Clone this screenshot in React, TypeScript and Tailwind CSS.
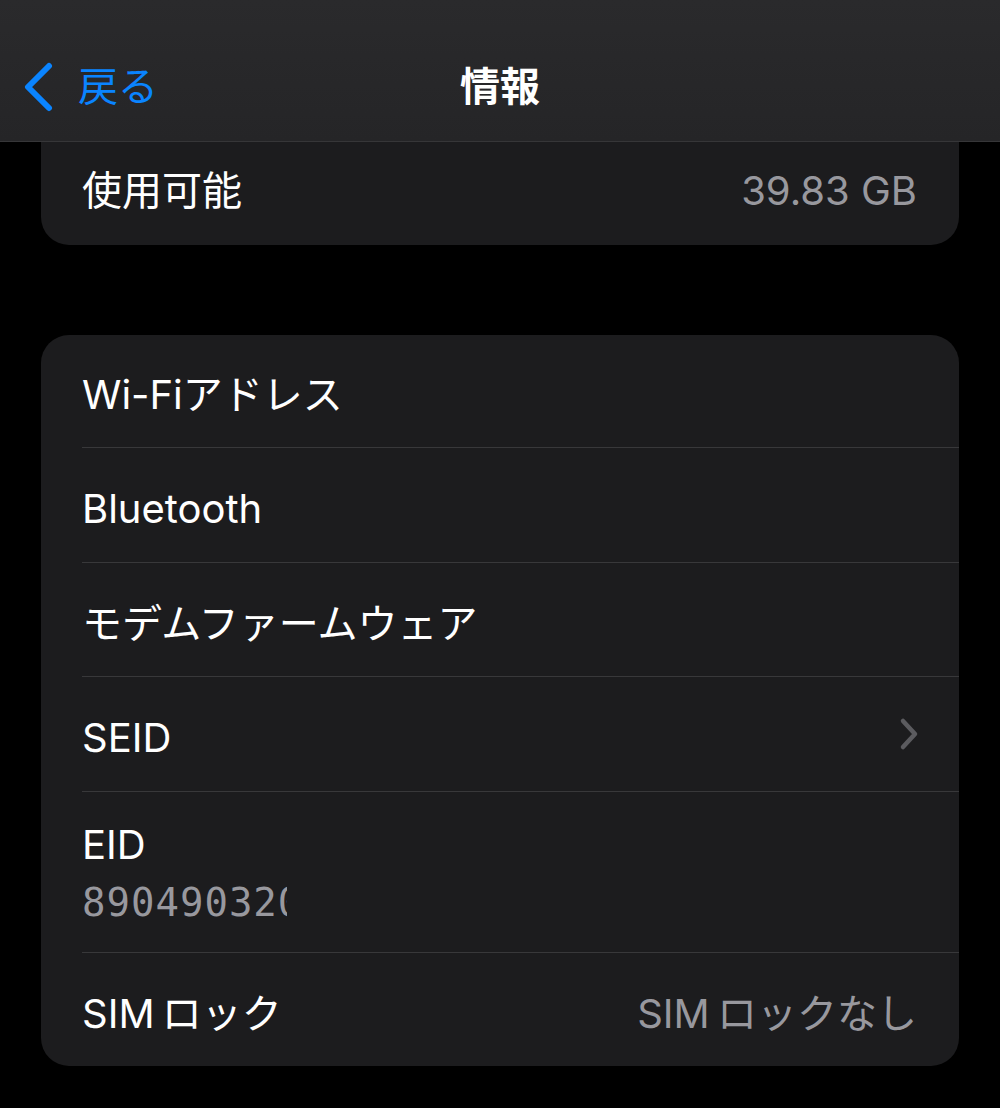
const font = "font-['Inter','Noto_Sans_CJK_JP',sans-serif]";

function Row({
  label,
  value,
  chevron,
  h,
  last,
}: {
  label: string;
  value?: string;
  chevron?: boolean;
  h: string;
  last?: boolean;
}) {
  return (
    <div
      className={`ml-[41px] pr-[42px] pt-[8px] flex items-center justify-between ${h} ${
        last ? "" : "border-b border-[#38383a]"
      }`}
    >
      <span className="text-[40px] leading-[48px] text-white">{label}</span>
      {value && <span className="text-[40px] leading-[48px] text-[#98989e]">{value}</span>}
      {chevron && (
        <svg width="20" height="34" viewBox="0 0 20 34" fill="none" className="mr-[-2px] mt-[-8px]">
          <path d="M4 4 L16 17 L4 30" stroke="#5b5b5f" strokeWidth="4.5" strokeLinecap="round" strokeLinejoin="round" />
        </svg>
      )}
    </div>
  );
}

export default function App() {
  return (
    <div className={`min-h-screen w-full bg-black ${font}`}>
      {/* Nav bar */}
      <div className="h-[142px] pt-[32px] grid grid-cols-[1fr_auto_1fr] items-center bg-gradient-to-b from-[#2a2a2c] to-[#252527] border-b border-[#363638]">
        <div className="flex items-center pl-[22px] gap-[24px]">
          <svg width="32" height="50" viewBox="0 0 32 50" fill="none">
            <path d="M27 4 L6 25 L27 46" stroke="#0a84ff" strokeWidth="6" strokeLinecap="round" strokeLinejoin="round" />
          </svg>
          <span className="text-[40px] leading-[48px] text-[#0a84ff]">戻る</span>
        </div>
        <span className="text-[40px] leading-[48px] font-semibold text-white">情報</span>
        <div />
      </div>

      {/* Storage card (scrolled under the bar) */}
      <div className="mx-[41px] rounded-b-[28px] bg-[#1c1c1e] h-[103px] pb-[6px] pl-[41px] pr-[42px] flex items-center justify-between">
        <span className="text-[40px] leading-[48px] text-white">使用可能</span>
        <span className="text-[40px] leading-[48px] text-[#98989e]">39.83 GB</span>
      </div>

      <div className="h-[90px]" />

      {/* Info card */}
      <div className="mx-[41px] rounded-[28px] bg-[#1c1c1e] overflow-hidden">
        <Row label="Wi-Fiアドレス" h="h-[113px]" />
        <Row label="Bluetooth" h="h-[115px]" />
        <Row label="モデムファームウェア" h="h-[114px]" />
        <Row label="SEID" chevron h="h-[115px]" />
        <div className="ml-[41px] h-[161px] border-b border-[#38383a] flex flex-col justify-center pt-[4px]">
          <span className="text-[40px] leading-[48px] text-white">EID</span>
          <div className="w-[205px] overflow-hidden whitespace-nowrap mt-[10px]">
            <span className="font-['DejaVu_Sans_Mono',monospace] text-[39px] leading-[48px] tracking-[1px] text-[#98989e]">
              8904903200
            </span>
          </div>
        </div>
        <Row label={"SIM\u2009ロック"} value={"SIM\u2009ロックなし"} h="h-[113px]" last />
      </div>
    </div>
  );
}
